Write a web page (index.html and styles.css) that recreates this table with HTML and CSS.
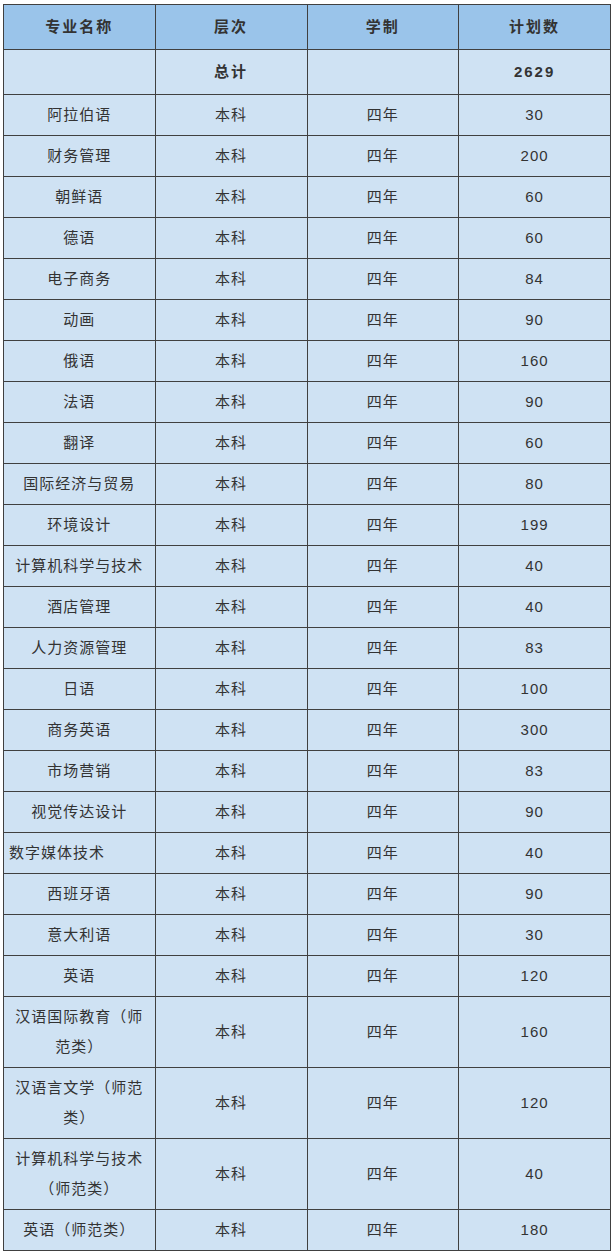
FILE: index.html
```html
<!DOCTYPE html>
<html lang="zh">
<head>
<meta charset="utf-8">
<title>招生计划</title>
<link rel="stylesheet" href="styles.css">
</head>
<body>
<table class="plan">
<colgroup><col class="c"><col class="c"><col class="c"><col class="c"></colgroup>
<thead>
<tr><th>专业名称</th><th>层次</th><th>学制</th><th>计划数</th></tr>
</thead>
<tbody>
<tr class="total"><td></td><td>总计</td><td></td><td>2629</td></tr>
<tr><td>阿拉伯语</td><td>本科</td><td>四年</td><td>30</td></tr>
<tr><td>财务管理</td><td>本科</td><td>四年</td><td>200</td></tr>
<tr><td>朝鲜语</td><td>本科</td><td>四年</td><td>60</td></tr>
<tr><td>德语</td><td>本科</td><td>四年</td><td>60</td></tr>
<tr><td>电子商务</td><td>本科</td><td>四年</td><td>84</td></tr>
<tr><td>动画</td><td>本科</td><td>四年</td><td>90</td></tr>
<tr><td>俄语</td><td>本科</td><td>四年</td><td>160</td></tr>
<tr><td>法语</td><td>本科</td><td>四年</td><td>90</td></tr>
<tr><td>翻译</td><td>本科</td><td>四年</td><td>60</td></tr>
<tr><td>国际经济与贸易</td><td>本科</td><td>四年</td><td>80</td></tr>
<tr><td>环境设计</td><td>本科</td><td>四年</td><td>199</td></tr>
<tr><td>计算机科学与技术</td><td>本科</td><td>四年</td><td>40</td></tr>
<tr><td>酒店管理</td><td>本科</td><td>四年</td><td>40</td></tr>
<tr><td>人力资源管理</td><td>本科</td><td>四年</td><td>83</td></tr>
<tr><td>日语</td><td>本科</td><td>四年</td><td>100</td></tr>
<tr><td>商务英语</td><td>本科</td><td>四年</td><td>300</td></tr>
<tr><td>市场营销</td><td>本科</td><td>四年</td><td>83</td></tr>
<tr><td>视觉传达设计</td><td>本科</td><td>四年</td><td>90</td></tr>
<tr><td class="left">数字媒体技术</td><td>本科</td><td>四年</td><td>40</td></tr>
<tr><td>西班牙语</td><td>本科</td><td>四年</td><td>90</td></tr>
<tr><td>意大利语</td><td>本科</td><td>四年</td><td>30</td></tr>
<tr><td>英语</td><td>本科</td><td>四年</td><td>120</td></tr>
<tr><td>汉语国际教育（师范类）</td><td>本科</td><td>四年</td><td>160</td></tr>
<tr><td>汉语言文学（师范类）</td><td>本科</td><td>四年</td><td>120</td></tr>
<tr><td>计算机科学与技术（师范类）</td><td>本科</td><td>四年</td><td>40</td></tr>
<tr><td>英语（师范类）</td><td>本科</td><td>四年</td><td>180</td></tr>
</tbody>
</table>
</body>
</html>
```
FILE: styles.css
```css
html, body {
  margin: 0;
  padding: 0;
  background: #ffffff;
}
body {
  padding: 4px 0 0 3px;
  font-family: "Liberation Sans", "Noto Sans CJK SC", sans-serif;
  color: #333333;
}
.plan {
  border-collapse: collapse;
  table-layout: fixed;
  width: 608px;
  background: #cfe2f3;
  border: 1px solid #404040;
}
.plan .c {
  width: 25%;
}
.plan th,
.plan td {
  border: 1px solid #404040;
  padding: 5px 5px;
  line-height: 30px;
  font-size: 15px;
  letter-spacing: 1px;
  text-align: center;
  vertical-align: middle;
  font-weight: normal;
}
.plan thead th {
  background: #9ac4ea;
  font-weight: bold;
  padding: 7px 5px;
  letter-spacing: 2px;
}
.plan .total td {
  font-weight: bold;
  padding: 7px 5px;
  letter-spacing: 2px;
}
.plan td.left {
  text-align: left;
}
```
